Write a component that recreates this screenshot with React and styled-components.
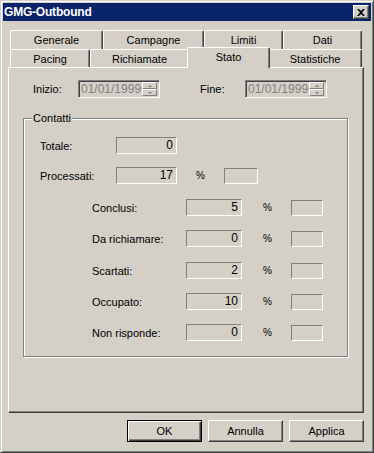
import styled, { createGlobalStyle } from "styled-components";

const GlobalStyle = createGlobalStyle`
  html, body { margin: 0; padding: 0; background: #d4d0c8; }
  body { font-family: "Liberation Sans", Arial, sans-serif; font-size: 11px; color: #000; }
`;

const backTabs = [
  { label: "Generale", w: 93 },
  { label: "Campagne", w: 101 },
  { label: "Limiti", w: 79 },
  { label: "Dati", w: 79 },
];
const frontTabs = [
  { label: "Pacing", w: 80 },
  { label: "Richiamate", w: 99 },
  { label: "Stato", w: 79, active: true },
  { label: "Statistiche", w: 94 },
];

const detailRows = [
  { label: "Conclusi:", value: "5", top: 15 },
  { label: "Da richiamare:", value: "0", top: 14 },
  { label: "Scartati:", value: "2", top: 15 },
  { label: "Occupato:", value: "10", top: 14 },
  { label: "Non risponde:", value: "0", top: 14 },
];

const App = () => {
  return (
    <>
      <GlobalStyle />
      <Window>
        <TitleBar>
          <Title>GMG-Outbound</Title>
          <CloseButton>
            <svg width="8" height="7" viewBox="0 0 8 7">
              <path d="M0 0h2l2 2 2-2h2L5 3.5 8 7H6L4 5 2 7H0l3-3.5z" fill="#000" />
            </svg>
          </CloseButton>
        </TitleBar>
        <Body>
          <TabStrip>
            <TabRow $h={19}>
              {backTabs.map((t) => (
                <Tab key={t.label} $w={t.w}>
                  {t.label}
                </Tab>
              ))}
            </TabRow>
            <TabRow $h={18}>
              {frontTabs.map((t) => (
                <Tab key={t.label} $w={t.w} $active={t.active}>
                  {t.label}
                </Tab>
              ))}
            </TabRow>
          </TabStrip>
          <Panel>
            <DateRow>
              <DateLabel>Inizio:</DateLabel>
              <DateBox>
                <span>01/01/1999</span>
                <Spinner>
                  <SpinButton>
                    <ArrowUp />
                  </SpinButton>
                  <SpinButton>
                    <ArrowDown />
                  </SpinButton>
                </Spinner>
              </DateBox>
              <Spacer />
              <DateLabel>Fine:</DateLabel>
              <DateBox>
                <span>01/01/1999</span>
                <Spinner>
                  <SpinButton>
                    <ArrowUp />
                  </SpinButton>
                  <SpinButton>
                    <ArrowDown />
                  </SpinButton>
                </Spinner>
              </DateBox>
            </DateRow>
            <GroupBox>
              <Legend>Contatti</Legend>
              <TopRow $top={18}>
                <TopLabel>Totale:</TopLabel>
                <ValueBox $w={61}>0</ValueBox>
              </TopRow>
              <TopRow $top={13}>
                <TopLabel>Processati:</TopLabel>
                <ValueBox $w={61}>17</ValueBox>
                <Percent $w={28}>%</Percent>
                <PercentBox $w={34} />
              </TopRow>
              {detailRows.map((r) => (
                <DetailRow key={r.label} $top={r.top}>
                  <DetailLabel>{r.label}</DetailLabel>
                  <ValueBox $w={56}>{r.value}</ValueBox>
                  <Percent $w={28} $ml={21}>%</Percent>
                  <PercentBox $w={32} />
                </DetailRow>
              ))}
            </GroupBox>
          </Panel>
          <ButtonRow>
            <Button $default>OK</Button>
            <Button>Annulla</Button>
            <Button>Applica</Button>
          </ButtonRow>
        </Body>
      </Window>
    </>
  );
};

const Window = styled.div`
  width: 374px;
  height: 453px;
  box-sizing: border-box;
  background: #d4d0c8;
  border: 1px solid;
  border-color: #d4d0c8 #404040 #404040 #d4d0c8;
  box-shadow: inset 1px 1px #fff, inset -1px -1px #808080;
  padding: 2px;
  display: flex;
  flex-direction: column;
`;

const TitleBar = styled.div`
  height: 18px;
  background: #0a246a;
  display: flex;
  align-items: center;
  justify-content: space-between;
  padding: 0 2px 0 1px;
`;

const Title = styled.span`
  color: #fff;
  font-weight: bold;
  font-size: 12px;
  letter-spacing: -0.2px;
`;

const CloseButton = styled.div`
  width: 16px;
  height: 14px;
  box-sizing: border-box;
  background: #d4d0c8;
  border: 1px solid;
  border-color: #fff #404040 #404040 #fff;
  box-shadow: inset -1px -1px #808080;
  display: flex;
  align-items: center;
  justify-content: center;
`;

const Body = styled.div`
  display: flex;
  flex-direction: column;
  padding: 9px 0 0 5px;
`;

const TabStrip = styled.div`
  display: flex;
  flex-direction: column;
  padding-left: 2px;
`;

const TabRow = styled.div`
  display: flex;
  height: ${(p) => p.$h}px;
`;

const Tab = styled.div`
  position: relative;
  width: ${(p) => p.$w}px;
  box-sizing: border-box;
  background: #d4d0c8;
  border-top: 1px solid #fff;
  border-left: 1px solid #fff;
  border-right: 1px solid #404040;
  box-shadow: inset -1px 0 #808080;
  border-top-left-radius: 2px;
  border-top-right-radius: 2px;
  display: flex;
  align-items: center;
  justify-content: center;
  font-size: 11px;
  ${(p) =>
    p.$active &&
    `
    z-index: 2;
    margin: -2px -2px -1px -2px;
    width: ${p.$w + 4}px;
    padding-bottom: 3px;
  `}
`;

const Panel = styled.div`
  width: 356px;
  height: 346px;
  box-sizing: border-box;
  border: 1px solid;
  border-color: #fff #404040 #404040 #fff;
  box-shadow: inset -1px -1px #808080;
  padding: 12px 0 0 14px;
  display: flex;
  flex-direction: column;
`;

const DateRow = styled.div`
  display: flex;
  align-items: center;
  padding-left: 10px;
`;

const DateLabel = styled.span`
  width: 45px;
  color: #000;
`;

const Spacer = styled.div`
  width: 40px;
`;

const DateBox = styled.div`
  width: 82px;
  height: 18px;
  box-sizing: border-box;
  border: 1px solid;
  border-color: #808080 #fff #fff #808080;
  box-shadow: inset 1px 1px #404040, inset -1px -1px #d4d0c8;
  display: flex;
  align-items: center;
  justify-content: space-between;
  padding: 0 2px 0 2px;
  color: #808080;
  font-size: 12px;
`;

const Spinner = styled.div`
  display: flex;
  flex-direction: column;
  width: 15px;
`;

const SpinButton = styled.div`
  height: 7px;
  box-sizing: border-box;
  background: #d4d0c8;
  border: 1px solid;
  border-color: #fff #808080 #808080 #fff;
  display: flex;
  align-items: center;
  justify-content: center;
`;

const ArrowUp = styled.div`
  width: 0;
  height: 0;
  border-left: 2px solid transparent;
  border-right: 2px solid transparent;
  border-bottom: 2px solid #808080;
`;

const ArrowDown = styled(ArrowUp)`
  border-bottom: none;
  border-top: 2px solid #808080;
`;

const GroupBox = styled.div`
  position: relative;
  margin-top: 20px;
  width: 325px;
  height: 239px;
  box-sizing: border-box;
  border: 1px solid #808080;
  box-shadow: inset 1px 1px #fff, 1px 1px #fff;
  display: flex;
  flex-direction: column;
  padding-left: 16px;
`;

const Legend = styled.span`
  position: absolute;
  top: -7px;
  left: 8px;
  padding: 0 1px;
  background: #d4d0c8;
  line-height: 13px;
`;

const TopRow = styled.div`
  display: flex;
  align-items: center;
  margin-top: ${(p) => p.$top}px;
  height: 17px;
`;

const TopLabel = styled.span`
  width: 76px;
`;

const DetailRow = styled(TopRow)`
  padding-left: 52px;
`;

const DetailLabel = styled.span`
  width: 94px;
`;

const ValueBox = styled.div`
  width: ${(p) => p.$w}px;
  height: 17px;
  box-sizing: border-box;
  border: 1px solid;
  border-color: #808080 #fff #fff #808080;
  text-align: right;
  padding-right: 3px;
  line-height: 15px;
  font-size: 12px;
`;

const Percent = styled.span`
  width: ${(p) => p.$w}px;
  margin-left: ${(p) => p.$ml ?? 19}px;
  font-size: 10px;
`;

const PercentBox = styled.div`
  width: ${(p) => p.$w}px;
  height: 16px;
  box-sizing: border-box;
  border: 1px solid;
  border-color: #808080 #fff #fff #808080;
`;

const ButtonRow = styled.div`
  display: flex;
  justify-content: flex-end;
  gap: 6px;
  width: 356px;
  margin-top: 7px;
`;

const Button = styled.div`
  width: 75px;
  height: 22px;
  box-sizing: border-box;
  background: #d4d0c8;
  border: 1px solid;
  border-color: #fff #404040 #404040 #fff;
  box-shadow: inset -1px -1px #808080;
  display: flex;
  align-items: center;
  justify-content: center;
  font-size: 11px;
  ${(p) =>
    p.$default &&
    `
    border: 1px solid #000;
    box-shadow: inset 1px 1px #fff, inset -1px -1px #404040, inset -2px -2px #808080;
  `}
`;

export default App;
